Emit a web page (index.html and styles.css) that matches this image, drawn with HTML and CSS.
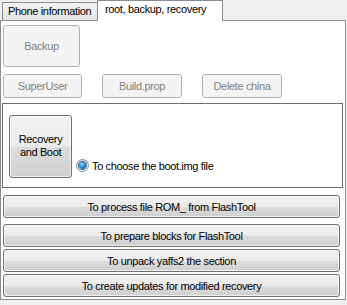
FILE: index.html
```html
<!DOCTYPE html>
<html lang="en">
<head>
    <meta charset="UTF-8">
    <title>root, backup, recovery</title>
    <link rel="stylesheet" href="styles.css">
</head>
<body>
    <div class="tabs">
        <div class="tab">Phone information</div>
        <div class="tab active">root, backup, recovery</div>
    </div>

    <div class="panel">
        <button class="btn disabled big">Backup</button>

        <div class="small-row">
            <button class="btn disabled small">SuperUser</button>
            <button class="btn disabled small">Build.prop</button>
            <button class="btn disabled small">Delete china</button>
        </div>

        <div class="group">
            <button class="btn recovery">Recovery<br>and Boot</button>
            <label class="radio-row">
                <span class="radio"><span class="dot"></span></span>
                To choose the boot.img file
            </label>
        </div>

        <button class="btn wide first">To process file ROM_ from FlashTool</button>
        <button class="btn wide">To prepare blocks for FlashTool</button>
        <button class="btn wide">To unpack yaffs2 the section</button>
        <button class="btn wide">To create updates for modified recovery</button>
    </div>
</body>
</html>
```

FILE: styles.css
```css
body {
    margin: 0;
    background-color: #f0f0f0;
    font-family: "Liberation Sans", Arial, sans-serif;
    font-size: 11px;
    letter-spacing: -0.35px;
    color: #000;
    width: 347px;
    height: 305px;
}
.tabs {
    display: flex;
    align-items: flex-end;
    height: 20px;
    position: relative;
    z-index: 1;
}
.tab {
    box-sizing: border-box;
    width: 96px;
    height: 18px;
    margin-left: 2px;
    padding: 2px 0 0 5px;
    border: 1px solid #898c95;
    border-bottom: none;
    background: linear-gradient(#f3f3f3, #e3e3e3);
    white-space: nowrap;
}
.tab.active {
    width: 126px;
    height: 21px;
    margin-left: -1px;
    margin-bottom: -1px;
    padding: 2px 0 0 7px;
    background: #fff;
}
.panel {
    box-sizing: border-box;
    width: 346px;
    height: 280px;
    border: 1px solid #898c95;
    background: #fff;
    padding: 4px 0 0 2px;
}
.btn {
    display: block;
    box-sizing: border-box;
    margin: 0;
    padding: 0;
    font-family: inherit;
    font-size: 11px;
    letter-spacing: -0.35px;
    color: #000;
    border: 1px solid #707070;
    border-radius: 3px;
    background: linear-gradient(#f2f2f2 0%, #ebebeb 50%, #dddddd 51%, #cfcfcf 100%);
    box-shadow: inset 0 0 0 1px rgba(255,255,255,0.7);
}
.btn.disabled {
    color: #838383;
    border-color: #adb2b5;
    background: #f4f4f4;
    box-shadow: none;
}
.big {
    width: 77px;
    height: 42px;
}
.small-row {
    display: flex;
    gap: 20px;
    margin-top: 7px;
}
.small {
    width: 79px;
    height: 24px;
}
.small-row .small + .small {
    width: 80px;
}
.group {
    box-sizing: border-box;
    display: flex;
    align-items: flex-end;
    width: 341px;
    height: 85px;
    margin: 5px 0 0 -1px;
    padding: 0 0 9px 6px;
    border: 1px solid #6d6d6d;
}
.recovery {
    width: 63px;
    height: 63px;
    line-height: 13px;
    padding-bottom: 2px;
}
.radio-row {
    display: flex;
    align-items: center;
    gap: 3px;
    margin: 0 0 6px 4px;
    white-space: nowrap;
}
.radio {
    box-sizing: border-box;
    display: flex;
    align-items: center;
    justify-content: center;
    width: 13px;
    height: 13px;
    border-radius: 50%;
    border: 1px solid #8e8f8f;
    background: linear-gradient(#dcdcdc, #fbfbfb);
}
.dot {
    width: 7px;
    height: 7px;
    border-radius: 50%;
    background: radial-gradient(circle at 40% 35%, #8fdcff 0%, #2c8fd6 45%, #0e4a93 100%);
    box-shadow: 0 0 0 1px #3b6fa8;
}
.wide {
    width: 337px;
    height: 23px;
    margin-top: 2px;
}
.wide.first {
    margin-top: 7px;
    margin-bottom: 6px;
}
```
